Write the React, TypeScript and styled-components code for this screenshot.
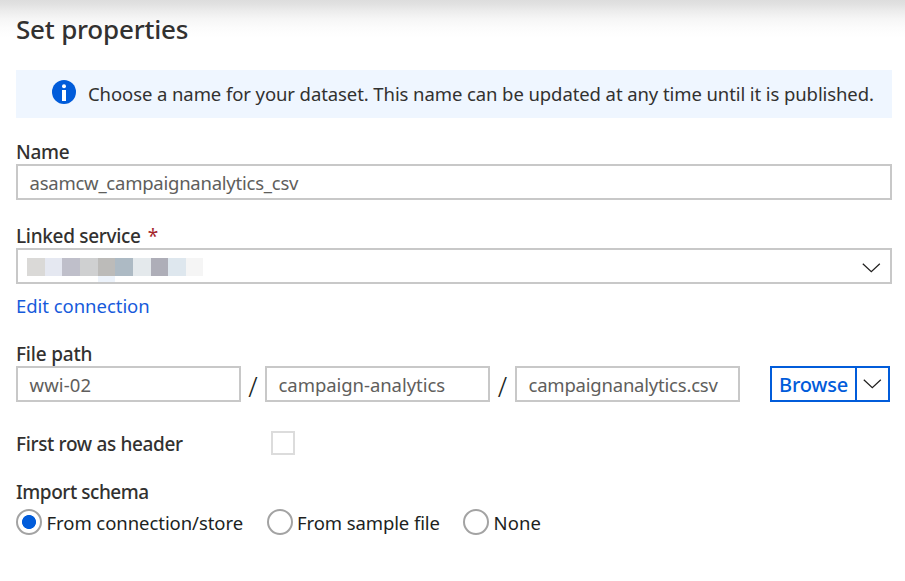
import React, { useState } from 'react';
import styled, { createGlobalStyle } from 'styled-components';

const GlobalStyle = createGlobalStyle`
  * { box-sizing: border-box; }
  body { margin: 0; background: #fff; }
`;

const Panel = styled.main`
  width: 905px;
  height: 581px;
  padding: 0 13px 0 16px;
  overflow: hidden;
  color: #323130;
  font: 400 18.5px/24px 'Noto Sans', 'Open Sans', sans-serif;
  background: linear-gradient(#dddddd 0, #e1e1e1 4px, #ececec 11px, #f6f6f6 19px, #fcfcfc 28px, #ffffff 38px) no-repeat 0 0 / 100% 38px, #fff;
`;

const Title = styled.h1`
  margin: 0;
  padding-top: 12px;
  height: 70px;
  font-size: 26px;
  line-height: 34px;
  font-weight: 550;
  letter-spacing: -0.2px;
`;

const Banner = styled.div`
  display: flex;
  height: 48px;
  padding-left: 36px;
  background: #eff6ff;
  svg { margin: 10px 12px 0 0; flex: none; }
`;

const BannerText = styled.p`
  margin: 12px 0 0;
  white-space: nowrap;
  letter-spacing: -0.09px;
`;

const Section = styled.section<{ $top: number }>`
  padding-top: ${p => p.$top}px;
`;

const Label = styled.div<{ $track: number }>`
  height: 24px;
  font-size: 19px;
  font-weight: 550;
  letter-spacing: ${p => p.$track}px;
  white-space: nowrap;
`;

const Required = styled.span`
  color: #a4262c;
  margin-left: 7px;
  font-weight: 400;
`;

const Field = styled.div`
  display: flex;
  height: 36px;
  border: 2px solid #c8c8c8;
  background: #fff;
`;

const Value = styled.span<{ $track: number }>`
  height: 22px;
  margin: 6px 0 0 11.5px;
  line-height: 22px;
  white-space: nowrap;
  color: #605e5c;
  letter-spacing: ${p => p.$track}px;
`;

const SelectField = styled(Field)`
  justify-content: space-between;
  padding: 8px 9px 0;
  svg { margin-top: 5px; }
`;

const Redacted = styled.div`
  display: flex;
  height: 18px;
`;

const Block = styled.i<{ $w: number; $c: string; $tail?: string }>`
  width: ${p => p.$w}px;
  height: 18px;
  background: ${p => p.$c};
  box-shadow: ${p => (p.$tail ? `0 6px 0 ${p.$tail}` : 'none')};
`;

const Link = styled.a`
  display: block;
  margin-top: 10px;
  height: 24px;
  color: #165adb;
  letter-spacing: -0.04px;
`;

const PathRow = styled.div`
  display: grid;
  grid-template-columns: 225px 24px 225px 25px 225px 120px;
  height: 36px;
`;

const Slash = styled.span`
  text-align: center;
  font-size: 27px;
  font-weight: 300;
  line-height: 41px;
  color: #201f1e;
`;

const SplitButton = styled.div`
  display: flex;
  width: 120px;
  height: 36px;
  margin-left: 30px;
  border: 2px solid #015cda;
`;

const BrowseButton = styled.button`
  width: 85px;
  padding: 2px 0 0 7px;
  border: 0;
  border-right: 2px solid #015cda;
  background: #fff;
  color: #015cda;
  font: 550 20px/30px 'Noto Sans', 'Open Sans', sans-serif;
  letter-spacing: -0.2px;
  text-align: left;
`;

const MenuButton = styled.button`
  display: flex;
  align-items: flex-start;
  flex: 1;
  padding: 11px 0 0 6px;
  border: 0;
  background: #fff;
  svg { flex: none; }
`;

const HeaderRow = styled.div`
  display: grid;
  grid-template-columns: 255px 24px;
  margin-top: 29px;
  height: 24px;
  ${Label} { padding-top: 1px; }
`;

const Checkbox = styled.button`
  width: 24px;
  height: 24px;
  padding: 0;
  border: 2px solid #dcdcdc;
  background: #fff;
`;

const RadioRow = styled.div`
  display: grid;
  grid-template-columns: 250.5px 196.5px auto;
  margin-top: 5px;
`;

const RadioLabel = styled.label<{ $track: number }>`
  display: flex;
  gap: 4.5px;
  height: 26px;
  color: #201f1e;
  white-space: nowrap;
  letter-spacing: ${p => p.$track}px;
  span { padding-top: 2px; }
`;

const Radio = styled.input`
  appearance: none;
  flex: none;
  width: 26px;
  height: 26px;
  margin: 0;
  border: 2px solid #a3a3a3;
  border-radius: 50%;
  background: #fff;
  &:checked { background: radial-gradient(circle, #015cda 6.6px, #fff 7.4px); }
`;

const Chevron = () => (
  <svg width="19" height="10" viewBox="0 0 19 10" fill="none" stroke="#201f1e" strokeWidth="1.25">
    <path d="M0.8 0.8 9.3 8.6 17.8 0.8" />
  </svg>
);

const InfoIcon = () => (
  <svg width="24" height="24" viewBox="0 0 24 24">
    <circle cx="12" cy="12" r="12" fill="#015cda" />
    <circle cx="12" cy="6.2" r="2" fill="#fff" />
    <path d="M10 10h4v11h-4z" fill="#fff" />
  </svg>
);

const blocks: { w: number; c: string; tail?: string }[] = [
  { w: 18, c: '#dad9d7' },
  { w: 17, c: '#e5e8f1' },
  { w: 18, c: '#bfbfca' },
  { w: 18, c: '#cfd0d1' },
  { w: 17, c: '#bcbbb9', tail: '#edf3fb' },
  { w: 18, c: '#adbac4' },
  { w: 18, c: '#e4e9ec' },
  { w: 17, c: '#aeaeb8' },
  { w: 18, c: '#dee7ee' },
  { w: 17, c: '#f5f5f5' },
];

const schemaOptions = [
  { text: 'From connection/store', track: -0.06 },
  { text: 'From sample file', track: -0.1 },
  { text: 'None', track: 0.1 },
];

export default function App() {
  const [schema, setSchema] = useState(schemaOptions[0].text);
  return (
    <>
      <GlobalStyle />
      <Panel>
        <Title>Set properties</Title>
        <Banner>
          <InfoIcon />
          <BannerText>Choose a name for your dataset. This name can be updated at any time until it is published.</BannerText>
        </Banner>

        <Section $top={22}>
          <Label $track={-0.25}>Name</Label>
          <Field><Value $track={-0.24}>asamcw_campaignanalytics_csv</Value></Field>
        </Section>

        <Section $top={24}>
          <Label $track={-0.31}>Linked service<Required>*</Required></Label>
          <SelectField>
            <Redacted>
              {blocks.map((b, i) => <Block key={i} $w={b.w} $c={b.c} $tail={b.tail} />)}
            </Redacted>
            <Chevron />
          </SelectField>
          <Link>Edit connection</Link>
        </Section>

        <Section $top={24}>
          <Label $track={-0.2}>File path</Label>
          <PathRow>
            <Field><Value $track={0.1}>wwi-02</Value></Field>
            <Slash>/</Slash>
            <Field><Value $track={-0.05}>campaign-analytics</Value></Field>
            <Slash>/</Slash>
            <Field><Value $track={-0.21}>campaignanalytics.csv</Value></Field>
            <SplitButton>
              <BrowseButton>Browse</BrowseButton>
              <MenuButton aria-label="Browse options"><Chevron /></MenuButton>
            </SplitButton>
          </PathRow>
        </Section>

        <HeaderRow>
          <Label $track={-0.34}>First row as header</Label>
          <Checkbox aria-label="First row as header" />
        </HeaderRow>

        <Section $top={25}>
          <Label $track={-0.45}>Import schema</Label>
          <RadioRow>
            {schemaOptions.map(o => (
              <RadioLabel key={o.text} $track={o.track}>
                <Radio type="radio" name="schema" checked={schema === o.text} onChange={() => setSchema(o.text)} />
                <span>{o.text}</span>
              </RadioLabel>
            ))}
          </RadioRow>
        </Section>
      </Panel>
    </>
  );
}
